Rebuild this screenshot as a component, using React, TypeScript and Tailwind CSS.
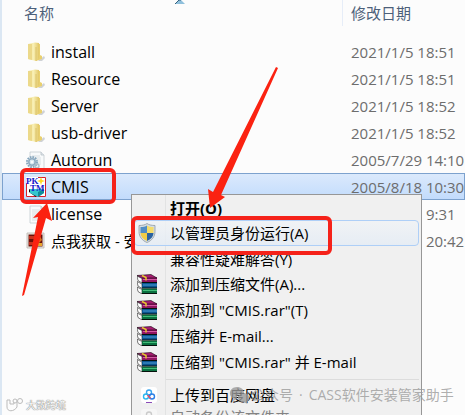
import { useId } from "react";

type FileKind = "folder" | "config" | "app" | "text" | "picture";

const files: { name: string; date: string; kind: FileKind }[] = [
  { name: "install", date: "2021/1/5 18:51", kind: "folder" },
  { name: "Resource", date: "2021/1/5 18:51", kind: "folder" },
  { name: "Server", date: "2021/1/5 18:52", kind: "folder" },
  { name: "usb-driver", date: "2021/1/5 18:52", kind: "folder" },
  { name: "Autorun", date: "2005/7/29 14:10", kind: "config" },
  { name: "CMIS", date: "2005/8/18 10:30", kind: "app" },
  { name: "license", date: "2021/1/25 9:31", kind: "text" },
  { name: "点我获取 - 安装教程", date: "2021/1/25 20:42", kind: "picture" },
];

function FolderIcon() {
  const id = useId();
  return (
    <svg viewBox="0 0 20 20" className="h-5 w-5">
      <defs>
        <linearGradient id={id} x1="0" x2="1">
          <stop offset="0" stopColor="#f3e59c" />
          <stop offset="0.5" stopColor="#f8efb4" />
          <stop offset="1" stopColor="#e2c766" />
        </linearGradient>
      </defs>
      <path d="M12 19l6-5 1 2-3 3z" fill="#c3c7cc" opacity="0.8" />
      <path d="M9 1.500l5 .5v11l2 1v3l-6 2z" fill="#e9d06f" />
      <path d="M2 2l7-1.500 4 .5v15l-3 3-8-2z" fill={`url(#${id})`} />
      <path d="M2 2v15l4 1V2z" fill="#ecd98a" />
      <path d="M10 5v14" stroke="#d2b452" strokeWidth="0.6" />
    </svg>
  );
}

function PageIcon({ gear }: { gear?: boolean }) {
  return (
    <svg viewBox="0 0 20 20" className="h-5 w-5">
      <path d="M4 2h11l3 3v14H4z" fill="#f8fafb" stroke="#c3cbd1" strokeWidth="0.8" />
      <path d="M15 2v3h3" fill="#dfe5ea" stroke="#b8c1c8" strokeWidth="0.8" />
      <path d="M6 6h8M6 8h9M6 10h9M6 12h9M6 14h9M6 16h7" stroke="#cbd2d8" strokeWidth="0.7" />
      {gear && (
        <g fill="none">
          <circle cx="6" cy="12" r="5" stroke="#84a5bd" strokeWidth="2" strokeDasharray="1.6 1" />
          <circle cx="6" cy="12" r="3.2" fill="#dbe8f1" stroke="#8eabc0" strokeWidth="1.6" />
          <circle cx="6" cy="12" r="1" fill="#fff" />
          <circle cx="11" cy="16" r="2" stroke="#a8bdcb" strokeWidth="1.4" />
        </g>
      )}
    </svg>
  );
}

function AppIcon() {
  return (
    <svg viewBox="0 0 20 20" className="h-5 w-5">
      <path d="M0 0h20v20H0z" fill="#fff" />
      <path d="M.5 6v13.500h19V.5H12" fill="none" stroke="#d8202c" />
      <path d="M3 12l7 4v4l-7-5z" fill="#111" />
      <path d="M4 12h14v4l-6 4-8-4z" fill="#35c6cf" />
      <path d="M12 15l6-3v4l-6 4z" fill="#128b9a" />
      <path d="M15 0l1 3 3 1-3 1-1 3-1-3-3-1 3-1z" fill="#ffd91f" />
      <text x="0" y="7" fontSize="9" fontWeight="700" fill="#1717c9" className="font-['Liberation_Serif',serif]">PK</text>
      <text x="4" y="14" fontSize="9" fontWeight="700" fill="#1717c9" className="font-['Liberation_Serif',serif]">TM</text>
    </svg>
  );
}

function PictureIcon() {
  return (
    <svg viewBox="0 0 20 20" className="h-5 w-5">
      <path d="M1 2h17v15H1z" fill="#ece9e5" stroke="#b9b4ae" strokeWidth="0.8" />
      <path d="M2.500 3.500h14v12h-14z" fill="#6c1009" />
      <path d="M3 5h6v3H3zM3 11h5v3H3z" fill="#c6311d" />
      <path d="M9 6l5-1 2 4-3 3-5-1z" fill="#d9741e" />
      <path d="M10 12h6v3h-6z" fill="#e8a52c" />
    </svg>
  );
}

function FileIcon({ kind }: { kind: FileKind }) {
  if (kind === "folder") return <FolderIcon />;
  if (kind === "app") return <AppIcon />;
  if (kind === "picture") return <PictureIcon />;
  return <PageIcon gear={kind === "config"} />;
}

function ShieldIcon() {
  return (
    <svg viewBox="0 0 20 20" className="h-5 w-5">
      <path d="M10 .5c2 1.500 5 2 8 2v6c0 5-3 9-8 11-5-2-8-6-8-11v-6c3 0 6-.5 8-2z" fill="#d5dde2" stroke="#8f9ba3" strokeWidth="0.8" />
      <path d="M10 2.500v7.500H3.500V4c2.500 0 5-.5 6.500-1.500z" fill="#4f8cc4" />
      <path d="M10 2.500v7.500h6.500V4c-2.500 0-5-.5-6.500-1.500z" fill="#f4dc6a" />
      <path d="M3.500 10H10v8c-4-1.700-6.300-4.600-6.500-8z" fill="#f0cd45" />
      <path d="M16.500 10H10v8c4-1.700 6.300-4.600 6.500-8z" fill="#2b62a0" />
    </svg>
  );
}

function RarIcon() {
  const books = [
    { y: 13, fill: "#0a7040", light: "#43bd79" },
    { y: 7.5, fill: "#0b5590", light: "#4ea0d8" },
    { y: 2, fill: "#8f1560", light: "#d257a3" },
  ];
  return (
    <svg viewBox="0 0 20 20" className="h-5 w-5">
      {books.map((b) => (
        <g key={b.y} transform={`translate(0 ${b.y})`}>
          <path d="M0 0l5 2.500v4.500L1 4.500z" fill="#fff" stroke="#222" strokeWidth="0.6" />
          <path d="M5 1.500h15v5H5z" fill={b.fill} />
          <path d="M5 6.500h15" stroke="#06110c" />
          <path d="M6 3.500h14" stroke={b.light} />
        </g>
      ))}
      <path d="M0 1.500L14 .5l6 3.500H5z" fill="#a51c70" stroke="#180510" strokeWidth="0.6" />
      <path d="M5 1.500l4 2v3" fill="none" stroke="#e5c72e" strokeWidth="1.500" />
    </svg>
  );
}

function CloudIcon({ faded }: { faded?: boolean }) {
  return (
    <svg viewBox="0 0 16 16" className={faded ? "h-4 w-4 opacity-40 grayscale" : "h-4 w-4"}>
      <rect width="16" height="16" rx="3" fill="#fff" />
      <g fill="none" strokeWidth="1.400">
        <circle cx="8" cy="5.500" r="2.500" stroke="#3aa5ee" />
        <circle cx="5" cy="9.500" r="2.500" stroke="#29b7f0" />
        <circle cx="11" cy="9.500" r="2.500" stroke="#2b7ee5" />
        <path d="M6.500 8l3 3.500" stroke="#ed4b68" />
      </g>
      <path d="M5 15.500h6" stroke="#8a4bb8" />
    </svg>
  );
}

function MenuItem({ icon, label, className = "h-[26px] border-transparent" }: { icon?: React.ReactNode; label: string; className?: string }) {
  return (
    <button type="button" role="menuitem" className={`flex w-full items-center rounded-sm border text-left whitespace-nowrap ${className}`}>
      <span className="flex w-[35px] shrink-0 pl-0.5">{icon}</span>
      {label}
    </button>
  );
}

function ContextMenu() {
  return (
    <div role="menu" className="absolute top-[194px] left-[129px] w-[291px] border border-[#979797] bg-[#f0f0f0] px-0.5 text-black">
      <div className="bg-[linear-gradient(#e2e3e3,#e2e3e3)] bg-[length:1px_100%] bg-[position:31px_0] bg-no-repeat">
        <MenuItem label="打开(O)" className="h-[25px] border-transparent font-bold" />
        <MenuItem icon={<ShieldIcon />} label="以管理员身份运行(A)" className="h-[26px] border-[#aecff7] bg-linear-to-b from-[#f0f3f6]/80 to-[#e4ecf5]/80" />
        <MenuItem label="兼容性疑难解答(Y)" className="h-[25px] border-transparent" />
        <MenuItem icon={<RarIcon />} label="添加到压缩文件(A)..." />
        <MenuItem icon={<RarIcon />} label={'添加到 "CMIS.rar"(T)'} />
        <MenuItem icon={<RarIcon />} label="压缩并 E-mail..." />
        <MenuItem icon={<RarIcon />} label={'压缩到 "CMIS.rar" 并 E-mail'} />
        <hr className="my-1 ml-8 border-[#dcdcdc]" />
        <MenuItem icon={<span className="pl-1"><CloudIcon /></span>} label="上传到百度网盘" className="h-[22px] border-transparent" />
        <MenuItem icon={<span className="pl-1"><CloudIcon faded /></span>} label="自动备份该文件夹" className="h-[22px] border-transparent text-[#838383]" />
      </div>
    </div>
  );
}

export default function App() {
  return (
    <div className="relative h-screen overflow-hidden border-l-2 border-[#dbe7f3] bg-[#fcfcfc] font-['Open_Sans','Noto_Sans_CJK_SC',sans-serif] text-[15px] leading-5">
      <table className="w-full table-fixed border-separate border-spacing-0 whitespace-nowrap">
        <thead>
          <tr className="h-[26px] text-left text-[#4c607a]">
            <th className="w-[341px] border-r border-[#e6edf8] p-0 pl-[22px] font-normal">名称</th>
            <th className="p-0 pl-2 font-normal">修改日期</th>
          </tr>
        </thead>
        <tbody className="before:block before:h-3">
          {files.map((file) => (
            <tr
              key={file.name}
              className={file.kind === "app" ? "h-[27px] bg-linear-to-b from-[#dceafc] to-[#c1dbfc] outline outline-[#7da2ce] -outline-offset-1" : "h-[27px]"}
            >
              <td className="p-0 pl-6 text-black">
                <span className="flex items-center gap-[5px]">
                  <FileIcon kind={file.kind} />
                  <span className={file.kind === "picture" ? "" : "text-base/5"}>{file.name}</span>
                </span>
              </td>
              <td className="p-0 pl-2 text-[#6d6d6d]">{file.date}</td>
            </tr>
          ))}
        </tbody>
      </table>

      {/* sort direction marker of the name column */}
      <svg viewBox="0 0 10 4" className="absolute top-0 left-[173px] h-1 w-2.5">
        <path d="M0 4l4-4h2l4 4z" fill="#8fc0dc" />
        <path d="M0 4l4-4h2" fill="none" stroke="#37617c" />
      </svg>

      <ContextMenu />

      <div className="absolute top-[168px] left-[18px] h-9 w-24 rounded-md border-4 border-[#f5221a]" />
      <div className="absolute top-[216px] left-[129px] h-[39px] w-[201px] rounded-md border-4 border-[#f5221a]" />
      <svg viewBox="2 0 463 415" className="pointer-events-none absolute top-0 left-0 h-[415px] w-[463px]">
        <path d="M276 67l2 1-57 127 4 2-15 11-2-19 5 3z" fill="#fb2211" />
        <path d="M22 296l16-79-5 1 14-15 5 18-6-3-22 77z" fill="#fb2211" />
      </svg>

      <div className="absolute top-[385px] left-[227px] flex items-center gap-0.5 text-sm/5 whitespace-nowrap text-[#9a9a9a]/80">
        <svg viewBox="0 0 20 18" className="h-[18px] w-5" fill="currentColor">
          <path d="M8 1c4 0 7 2.500 7 6-5 0-8 3-7 6l-4 2 .5-2.500C-2 9 1 1 8 1z" />
          <path d="M14 7c7 0 8 7 4 9l.5 2-3-1.500C7 17 7 7 14 7z" />
        </svg>
        <span className="flex gap-1.5">
          <span>公众号</span>
          <span>·</span>
          <span>CASS软件安装管家助手</span>
        </span>
      </div>
      <div className="absolute bottom-0.5 left-1 flex items-center gap-0.5 text-[10px]/4 text-[#fafafa] [text-shadow:0_0_1px_#777,0_0_1px_#777]">
        <svg viewBox="0 0 18 14" className="h-3.5 w-[18px]" fill="#fcfcfc" stroke="#bbb">
          <path d="M1 2h3v4h4V3h3v6c-3 5-10 5-10 0z" />
          <circle cx="9" cy="3" r="2" />
          <circle cx="14" cy="3" r="2.500" />
        </svg>
        <span>大数跨境</span>
      </div>
    </div>
  );
}
